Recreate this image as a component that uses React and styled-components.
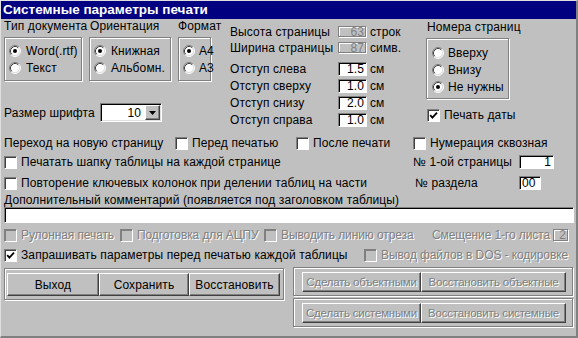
import React from 'react';
import styled, { createGlobalStyle, css } from 'styled-components';

const GlobalStyle = createGlobalStyle`
  html, body {
    margin: 0;
    padding: 0;
    background: #c0c0c0;
  }
  body {
    font-family: "Liberation Sans", Arial, sans-serif;
    font-size: 12px;
    letter-spacing: 0.12px;
    color: #000;
  }
  * {
    box-sizing: border-box;
  }
`;

const disabledText = css`
  color: #808080;
  text-shadow: 1px 1px 0 #fff;
`;

// серые подписи у недоступных флажков в оригинале чуть уже
const disabledLabel = css`
  ${disabledText};
  letter-spacing: -0.1px;
`;

const etched = css`
  border: 1px solid #808080;
  box-shadow: inset 1px 1px 0 #fff, 1px 1px 0 #fff;
`;

const Window = styled.div`
  width: 578px;
  height: 338px;
  background: #c0c0c0;
  border-top: 1px solid #dfdfdf;
  border-left: 1px solid #dfdfdf;
  border-right: 2px solid #808080;
  border-bottom: 2px solid #808080;
  overflow: hidden;
`;

const TitleBar = styled.div`
  height: 18px;
  line-height: 18px;
  background: #000080;
  color: #fff;
  font-weight: bold;
  font-size: 13.5px;
  letter-spacing: 0;
  padding-left: 2px;
`;

const Content = styled.div`
  padding: 0 2px 0 3px;
`;

const TopSection = styled.div`
  display: flex;
  height: 109px;
`;

const LeftCol = styled.div`
  width: 226px;
`;

const GroupsRow = styled.div`
  display: flex;
  gap: 7px;
`;

const GroupCol = styled.div`
  width: ${p => p.w}px;
`;

const Caption = styled.div`
  height: 14px;
  line-height: 14px;
  white-space: nowrap;
  margin-bottom: ${p => p.mb || 0}px;
  padding-left: ${p => p.pl || 0}px;
`;

const GroupBox = styled.div`
  ${etched};
  width: ${p => (p.w ? `${p.w}px` : 'auto')};
  height: ${p => p.h}px;
  padding: ${p => p.pt}px 0 0 ${p => p.pl}px;
`;

const OptionRow = styled.div`
  display: flex;
  align-items: center;
  gap: ${p => p.gap || 5}px;
  height: ${p => p.h || 17}px;
  white-space: nowrap;
  ${p => p.disabled && disabledLabel};
`;

const RadioSvg = styled.svg`
  flex: none;
  display: block;
`;

const Radio = ({ checked }) => (
  <RadioSvg width="12" height="12" viewBox="0 0 12 12">
    <circle cx="6" cy="6" r="5" fill="#fff" />
    <path d="M2.11 9.89A5.5 5.5 0 0 1 9.89 2.11" stroke="#808080" fill="none" />
    <path d="M9.89 2.11A5.5 5.5 0 0 1 2.11 9.89" stroke="#fff" fill="none" />
    <path d="M2.82 9.18A4.5 4.5 0 0 1 9.18 2.82" stroke="#404040" fill="none" />
    <path d="M9.18 2.82A4.5 4.5 0 0 1 2.82 9.18" stroke="#dfdfdf" fill="none" />
    {checked && <circle cx="6" cy="6" r="2" fill="#000" />}
  </RadioSvg>
);

const Box = styled.span`
  flex: none;
  width: 13px;
  height: 13px;
  display: flex;
  align-items: center;
  justify-content: center;
  background: ${p => (p.disabled ? '#c0c0c0' : '#fff')};
  border-top: 1px solid #808080;
  border-left: 1px solid #808080;
  border-right: 1px solid #fff;
  border-bottom: 1px solid #fff;
  box-shadow: inset 1px 1px 0 ${p => (p.disabled ? '#808080' : '#404040')};
`;

const Check = ({ checked, disabled }) => (
  <Box disabled={disabled}>
    {checked && (
      <svg width="9" height="9" viewBox="0 0 9 9">
        <path d="M1.2 4.2 L3.4 6.6 L8 1.6" stroke="#000" strokeWidth="1.8" fill="none" />
      </svg>
    )}
  </Box>
);

const CheckCell = styled.div`
  flex: none;
  width: ${p => (p.w ? `${p.w}px` : 'auto')};
`;

const CheckItem = ({ label, checked, disabled, w }) => (
  <CheckCell w={w}>
    <OptionRow h={16} gap={4} disabled={disabled}>
      <Check checked={checked} disabled={disabled} />
      {label}
    </OptionRow>
  </CheckCell>
);

const FontRow = styled.div`
  display: flex;
  align-items: center;
  margin-top: 22px;
  height: 19px;
`;

const FontLabel = styled.span`
  width: 96px;
`;

const Combo = styled.div`
  width: 62px;
  height: 19px;
  display: flex;
  align-items: center;
  background: #fff;
  border-top: 1px solid #808080;
  border-left: 1px solid #808080;
  border-right: 1px solid #fff;
  border-bottom: 1px solid #fff;
  box-shadow: inset 1px 1px 0 #000, inset -1px -1px 0 #dfdfdf;
`;

const ComboValue = styled.span`
  flex: 1;
  text-align: right;
  padding-right: 4px;
`;

const ComboButton = styled.span`
  width: 15px;
  height: 15px;
  margin-right: 1px;
  display: flex;
  align-items: center;
  justify-content: center;
  background: #c0c0c0;
  border-top: 1px solid #fff;
  border-left: 1px solid #fff;
  border-right: 1px solid #404040;
  border-bottom: 1px solid #404040;
  box-shadow: inset -1px -1px 0 #808080;
`;

const MiddleCol = styled.div`
  width: 196px;
  padding-top: 5px;
`;

const FieldRow = styled.div`
  display: flex;
  align-items: center;
  height: ${p => p.h}px;
  margin-top: ${p => p.mt || 0}px;
  white-space: nowrap;
`;

const FieldLabel = styled.span`
  flex: none;
  width: ${p => p.w}px;
`;

const Edit = styled.div`
  flex: none;
  width: ${p => p.w}px;
  height: ${p => p.h || 14}px;
  line-height: ${p => (p.h || 14) - 2}px;
  text-align: ${p => p.align || 'right'};
  padding: 0 2px;
  font-size: 12px;
  background: ${p => (p.disabled ? '#c0c0c0' : '#fff')};
  color: ${p => (p.disabled ? '#808080' : '#000')};
  border-top: 1px solid #808080;
  border-left: 1px solid #808080;
  border-right: 1px solid #fff;
  border-bottom: 1px solid #fff;
  box-shadow: ${p => (p.disabled ? 'inset -1px -1px 0 #808080, inset 1px 1px 0 #fff' : 'inset 1px 1px 0 #000')};
  margin-left: ${p => p.ml || 0}px;
  margin-right: ${p => p.mr || 0}px;
`;

const Unit = styled.span`
  margin-left: 3px;
`;

const RightCol = styled.div`
  width: 90px;
  padding-top: 1px;
`;

const CheckBlock = styled.div`
  margin-top: 9px;
  padding-left: 1px;
`;

const Row = styled.div`
  display: flex;
  align-items: center;
  height: ${p => p.h || 16}px;
  margin-top: ${p => p.mt || 0}px;
  white-space: nowrap;
`;

const TextCell = styled.span`
  flex: none;
  width: ${p => (p.w ? `${p.w}px` : 'auto')};
  margin-left: ${p => (p.auto ? 'auto' : '0')};
  ${p => p.disabled && disabledLabel};
`;

const CommentInput = styled.div`
  height: 16px;
  background: #fff;
  border-top: 1px solid #808080;
  border-left: 1px solid #808080;
  border-right: 1px solid #fff;
  border-bottom: 1px solid #fff;
  box-shadow: inset 1px 1px 0 #000;
`;

const BottomArea = styled.div`
  display: flex;
  align-items: flex-start;
  margin-top: 4px;
`;

const ButtonPanel = styled.div`
  ${etched};
  display: flex;
  width: ${p => p.w}px;
  height: ${p => p.h}px;
  padding: ${p => p.pt}px 0 0 ${p => p.pl}px;
  margin-top: ${p => p.mt || 0}px;
`;

const PanelStack = styled.div`
  display: flex;
  flex-direction: column;
  gap: 2px;
  margin-left: 9px;
`;

const Button = styled.button`
  flex: none;
  width: ${p => p.w}px;
  height: ${p => p.h}px;
  padding: 0;
  font-family: inherit;
  font-size: 12px;
  letter-spacing: 0.12px;
  background: #c0c0c0;
  color: #000;
  border-top: 1px solid #fff;
  border-left: 1px solid #fff;
  border-right: 1px solid #404040;
  border-bottom: 1px solid #404040;
  box-shadow: inset -1px -1px 0 #808080;
  white-space: nowrap;
  overflow: hidden;
  ${p => p.disabled && css`
    ${disabledText};
    font-size: 11.5px;
    letter-spacing: -0.2px;
  `};
`;

const Arrow = () => (
  <svg width="7" height="4" viewBox="0 0 7 4">
    <path d="M0 0 H7 L3.5 4 Z" fill="#000" />
  </svg>
);

export default function App() {
  return (
    <>
      <GlobalStyle />
      <Window>
        <TitleBar>Системные параметры печати</TitleBar>
        <Content>
          <TopSection>
            <LeftCol>
              <GroupsRow>
                <GroupCol w={78}>
                  <Caption mb={4}>Тип документа</Caption>
                  <GroupBox h={44} pt={4} pl={4}>
                    <OptionRow><Radio checked />Word(.rtf)</OptionRow>
                    <OptionRow><Radio />Текст</OptionRow>
                  </GroupBox>
                </GroupCol>
                <GroupCol w={82}>
                  <Caption mb={4} pl={1}>Ориентация</Caption>
                  <GroupBox h={44} pt={4} pl={4}>
                    <OptionRow><Radio checked />Книжная</OptionRow>
                    <OptionRow><Radio />Альбомн.</OptionRow>
                  </GroupBox>
                </GroupCol>
                <GroupCol w={33}>
                  <Caption mb={4}>Формат</Caption>
                  <GroupBox h={44} pt={4} pl={4}>
                    <OptionRow gap={4}><Radio checked />A4</OptionRow>
                    <OptionRow gap={4}><Radio />A3</OptionRow>
                  </GroupBox>
                </GroupCol>
              </GroupsRow>
              <FontRow>
                <FontLabel>Размер шрифта</FontLabel>
                <Combo>
                  <ComboValue>10</ComboValue>
                  <ComboButton><Arrow /></ComboButton>
                </Combo>
              </FontRow>
            </LeftCol>

            <MiddleCol>
              <FieldRow h={16}>
                <FieldLabel w={108}>Высота страницы</FieldLabel>
                <Edit w={29} h={12} disabled>63</Edit>
                <Unit>строк</Unit>
              </FieldRow>
              <FieldRow h={16}>
                <FieldLabel w={108}>Ширина страницы</FieldLabel>
                <Edit w={29} h={12} disabled>87</Edit>
                <Unit>симв.</Unit>
              </FieldRow>
              <FieldRow h={17} mt={4}>
                <FieldLabel w={108}>Отступ слева</FieldLabel>
                <Edit w={29}>1.5</Edit>
                <Unit>см</Unit>
              </FieldRow>
              <FieldRow h={17}>
                <FieldLabel w={108}>Отступ сверху</FieldLabel>
                <Edit w={29}>1.0</Edit>
                <Unit>см</Unit>
              </FieldRow>
              <FieldRow h={17}>
                <FieldLabel w={108}>Отступ снизу</FieldLabel>
                <Edit w={29}>2.0</Edit>
                <Unit>см</Unit>
              </FieldRow>
              <FieldRow h={17}>
                <FieldLabel w={108}>Отступ справа</FieldLabel>
                <Edit w={29}>1.0</Edit>
                <Unit>см</Unit>
              </FieldRow>
            </MiddleCol>

            <RightCol>
              <Caption mb={4} pl={1}>Номера страниц</Caption>
              <GroupBox w={83} h={61} pt={5} pl={5}>
                <OptionRow gap={4}><Radio />Вверху</OptionRow>
                <OptionRow gap={4}><Radio />Внизу</OptionRow>
                <OptionRow gap={4}><Radio checked />Не нужны</OptionRow>
              </GroupBox>
              <CheckBlock>
                <OptionRow h={14} gap={4}><Check checked />Печать даты</OptionRow>
              </CheckBlock>
            </RightCol>
          </TopSection>

          <Row mt={7}>
            <TextCell w={171}>Переход на новую страницу</TextCell>
            <CheckItem w={121} label="Перед печатью" />
            <CheckItem w={117} label="После печати" />
            <CheckItem label="Нумерация сквозная" />
          </Row>
          <Row mt={3}>
            <CheckItem w={409} label="Печатать шапку таблицы на каждой странице" />
            <TextCell w={106}>№ 1-ой страницы</TextCell>
            <Edit w={35} h={14}>1</Edit>
          </Row>
          <Row mt={5}>
            <CheckItem w={411} label="Повторение ключевых колонок при делении таблиц на части" />
            <TextCell w={104}>№ раздела</TextCell>
            <Edit w={22} h={14} align="left">00</Edit>
          </Row>
          <Row h={14} mt={2}>
            <TextCell>Дополнительный комментарий (появляется под заголовком таблицы)</TextCell>
          </Row>
          <CommentInput />
          <Row mt={4}>
            <CheckItem w={116} disabled label="Рулонная печать" />
            <CheckItem w={144} disabled label="Подготовка для АЦПУ" />
            <CheckItem disabled label="Выводить линию отреза" />
            <TextCell auto disabled>Смещение 1-го листа</TextCell>
            <Edit w={16} h={13} ml={3} mr={5} disabled>2</Edit>
          </Row>
          <Row mt={4}>
            <CheckItem w={360} checked label="Запрашивать параметры перед печатью каждой таблицы" />
            <CheckItem disabled label="Вывод файлов в DOS - кодировке" />
          </Row>

          <BottomArea>
            <ButtonPanel w={280} h={32} pt={4} pl={2} mt={1}>
              <Button w={92} h={23}>Выход</Button>
              <Button w={90} h={23}>Сохранить</Button>
              <Button w={91} h={23}>Восстановить</Button>
            </ButtonPanel>
            <PanelStack>
              <ButtonPanel w={280} h={29} pt={4} pl={8}>
                <Button w={119} h={20} disabled>Сделать объектными</Button>
                <Button w={145} h={20} disabled>Восстановить объектные</Button>
              </ButtonPanel>
              <ButtonPanel w={280} h={29} pt={4} pl={8}>
                <Button w={119} h={20} disabled>Сделать системными</Button>
                <Button w={145} h={20} disabled>Восстановить системные</Button>
              </ButtonPanel>
            </PanelStack>
          </BottomArea>
        </Content>
      </Window>
    </>
  );
}
